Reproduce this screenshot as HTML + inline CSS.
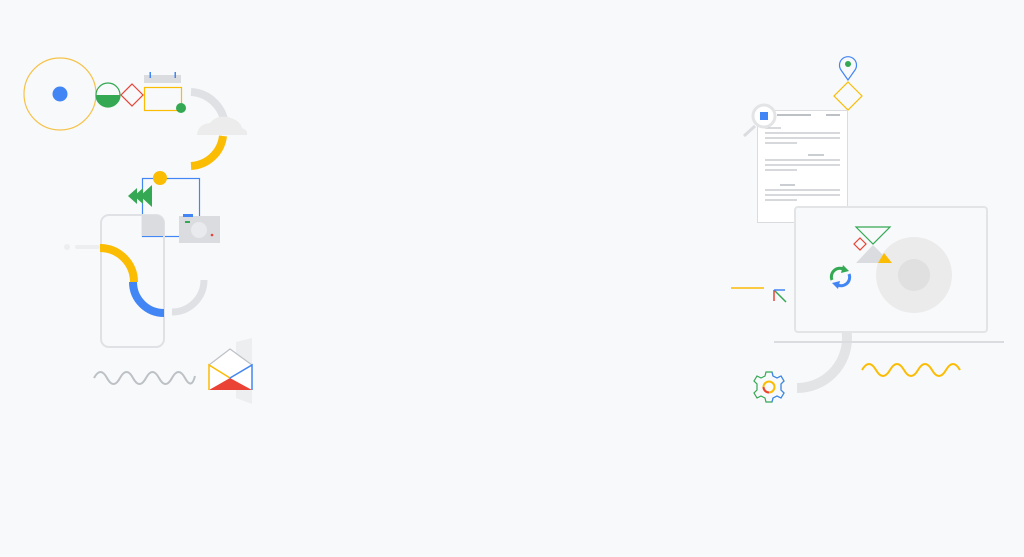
<!DOCTYPE html>
<html><head><meta charset="utf-8"><style>html,body{margin:0;padding:0;background:#f8f9fa;width:1024px;height:557px;overflow:hidden}</style></head>
<body>
<svg width="1024" height="557" viewBox="0 0 1024 557" xmlns="http://www.w3.org/2000/svg">
<rect width="1024" height="557" fill="#f8f9fa"/>
<!-- LEFT -->
<circle cx="60" cy="94" r="36" fill="none" stroke="#f6c34a" stroke-width="1.2"/>
<circle cx="60" cy="94" r="7.5" fill="#4285f4"/>
<circle cx="108" cy="95" r="12" fill="none" stroke="#34a853" stroke-width="1.2"/>
<path d="M96 95 A12 12 0 0 0 120 95 Z" fill="#34a853"/>
<path d="M132 84 L143 95 L132 106 L121 95 Z" fill="none" stroke="#ea4335" stroke-width="1.2"/>
<rect x="144" y="75" width="37" height="8" fill="#dadce0"/>
<rect x="149.5" y="72" width="1.5" height="6" fill="#4285f4"/>
<rect x="174.5" y="72" width="1.5" height="6" fill="#4285f4"/>
<rect x="144.5" y="87.5" width="37" height="23" fill="none" stroke="#fbbc04" stroke-width="1.2"/>
<circle cx="181" cy="108" r="5" fill="#34a853"/>
<path d="M191 92 A36 36 0 0 1 225 128" fill="none" stroke="#dfe1e5" stroke-width="8"/>
<path d="M223 136 A34 34 0 0 1 191 166" fill="none" stroke="#fbbc04" stroke-width="8"/>
<path d="M197 135 Q198 124 210 123 Q216 115 228 117 Q240 120 242 128 Q248 130 247 135 Z" fill="#ececec"/>
<rect x="142.5" y="178.5" width="57" height="58" fill="none" stroke="#4285f4" stroke-width="1.2"/>
<circle cx="160" cy="178" r="7" fill="#fbbc04"/>
<path d="M128 196 L137 188 L137 204 Z M134 196 L143 188 L143 204 Z M140 196 L152 185 L152 207 Z" fill="#34a853"/>
<rect x="101" y="215" width="63" height="132" rx="8" fill="none" stroke="#dfe1e5" stroke-width="2"/>
<path d="M142 215 L156 215 A8 8 0 0 1 164 223 L164 236 L142 236 Z" fill="#dadce0"/>
<rect x="179" y="216" width="41" height="27" fill="#dadce0"/>
<rect x="183" y="214" width="10" height="3" fill="#4285f4"/>
<rect x="185" y="221" width="5" height="2" fill="#34a853"/>
<circle cx="199" cy="230" r="8" fill="#e8eaed"/>
<circle cx="212" cy="235" r="1.3" fill="#ea4335"/>
<circle cx="67" cy="247" r="3" fill="#eceef0"/>
<rect x="75" y="245" width="25" height="4" rx="2" fill="#eceef0"/>
<path d="M100 248 A34 34 0 0 1 134 282" fill="none" stroke="#fbbc04" stroke-width="8"/>
<path d="M133 282 A31 31 0 0 0 164 313" fill="none" stroke="#4285f4" stroke-width="8"/>
<path d="M204 280 A32 32 0 0 1 172 312" fill="none" stroke="#dfe1e5" stroke-width="7"/>
<path d="M94 378 q6.5 -12 13 0 t13 0 t13 0 t13 0 t13 0 t13 0 t13 0 t10 -2" fill="none" stroke="#bdc1c6" stroke-width="2"/>
<path d="M236 342 L252 338 L252 404 L236 398 Z" fill="#eceef0"/>
<path d="M209 365 L230 349 L252 365" fill="#fff" stroke="#bdc1c6" stroke-width="1.2"/>
<rect x="209" y="365" width="43" height="25" fill="#fff"/>
<path d="M230 378 L209 390 L252 390 Z" fill="#ea4335"/>
<path d="M209 390 L209 365 L230 378" fill="none" stroke="#fbbc04" stroke-width="1.5"/>
<path d="M252 390 L252 365 L230 378" fill="none" stroke="#4285f4" stroke-width="1.5"/>
<!-- RIGHT -->
<path d="M797 288 A50 50 0 0 1 797 388" fill="none" stroke="#e3e4e6" stroke-width="10"/>
<path d="M848 80 L841 70 A8.5 8.5 0 1 1 855 70 Z" fill="none" stroke="#4285f4" stroke-width="1.2"/>
<circle cx="848" cy="64" r="3" fill="#34a853"/>
<path d="M848 82 L862 96 L848 110 L834 96 Z" fill="none" stroke="#fbbc04" stroke-width="1.2"/>
<rect x="757.5" y="110.5" width="90" height="112" fill="#fff" stroke="#dadce0"/>
<g stroke="#bdc1c6" stroke-width="1.2">
<line x1="777" y1="115" x2="811" y2="115" stroke-width="2"/><line x1="826" y1="115" x2="840" y2="115" stroke-width="2"/>
<line x1="765" y1="128" x2="781" y2="128"/><line x1="765" y1="133" x2="840" y2="133"/><line x1="765" y1="138" x2="840" y2="138"/><line x1="765" y1="143" x2="797" y2="143"/>
<line x1="808" y1="155" x2="824" y2="155" stroke-width="1.6"/>
<line x1="765" y1="160" x2="840" y2="160"/><line x1="765" y1="165" x2="840" y2="165"/><line x1="765" y1="170" x2="797" y2="170"/>
<line x1="780" y1="185" x2="795" y2="185" stroke-width="1.6"/>
<line x1="765" y1="190" x2="840" y2="190"/><line x1="765" y1="195" x2="840" y2="195"/><line x1="765" y1="200" x2="797" y2="200"/>
</g>
<line x1="755" y1="126" x2="744" y2="136" stroke="#dadce0" stroke-width="3"/>
<circle cx="764" cy="116" r="11" fill="#fff" stroke="#e3e4e6" stroke-width="3"/>
<rect x="760" y="112" width="8" height="8" fill="#4285f4"/>
<rect x="795" y="207" width="192" height="125" rx="3" fill="#f8f9fa" stroke="#e3e4e6" stroke-width="2"/>
<line x1="774" y1="342" x2="1004" y2="342" stroke="#dadce0" stroke-width="2"/>
<circle cx="914" cy="275" r="38" fill="#ebebec"/>
<circle cx="914" cy="275" r="16" fill="#e0e0e0"/>
<path d="M856 227 L890 227 L873 244 Z" fill="none" stroke="#34a853" stroke-width="1.2"/>
<path d="M860 238 L866 244 L860 250 L854 244 Z" fill="none" stroke="#ea4335" stroke-width="1.2"/>
<path d="M873 245 L856 263 L891 263 Z" fill="#dadce0"/>
<path d="M884 253 L878 263 L892 263 Z" fill="#fbbc04"/>
<path d="M832 280 A8.5 8.5 0 0 1 845 270" fill="none" stroke="#34a853" stroke-width="3"/>
<path d="M843 265 L849 271 L841 273 Z" fill="#34a853"/>
<path d="M849 274 A8.5 8.5 0 0 1 836 284" fill="none" stroke="#4285f4" stroke-width="3"/>
<path d="M838 289 L832 283 L840 281 Z" fill="#4285f4"/>
<line x1="731" y1="288" x2="764" y2="288" stroke="#fbbc04" stroke-width="1.5"/>
<line x1="774" y1="290" x2="786" y2="302" stroke="#34a853" stroke-width="1.5"/>
<line x1="774" y1="290" x2="774" y2="301" stroke="#ea4335" stroke-width="1.5"/>
<line x1="774" y1="290" x2="785" y2="290" stroke="#4285f4" stroke-width="1.5"/>
<g transform="translate(769 387)" fill="none" stroke-width="1.2">
<path d="M-3 -15 L3 -15 L4 -11 L8 -9 L12 -11 L15 -6 L12 -3 L12 3 L15 6 L12 11 L8 9 L4 11 L3 15 L-3 15 L-4 11 L-8 9 L-12 11 L-15 6 L-12 3 L-12 -3 L-15 -6 L-12 -11 L-8 -9 L-4 -11 Z" stroke="#34a853"/>
<path d="M3 -15 L4 -11 L8 -9 L12 -11 L15 -6 L12 -3 L12 3 L15 6 L12 11 L8 9 L4 11 L3 15" stroke="#4285f4"/>
<circle r="5.5" stroke="#fbbc04" stroke-width="2"/>
<path d="M-5.5 0 A5.5 5.5 0 0 0 0 5.5" stroke="#ea4335" stroke-width="2"/>
</g>
<path d="M862 370 q7 -12 14 0 t14 0 t14 0 t14 0 t14 0 t14 0 t14 0" fill="none" stroke="#fbbc04" stroke-width="2"/>
</svg>
</body></html>
